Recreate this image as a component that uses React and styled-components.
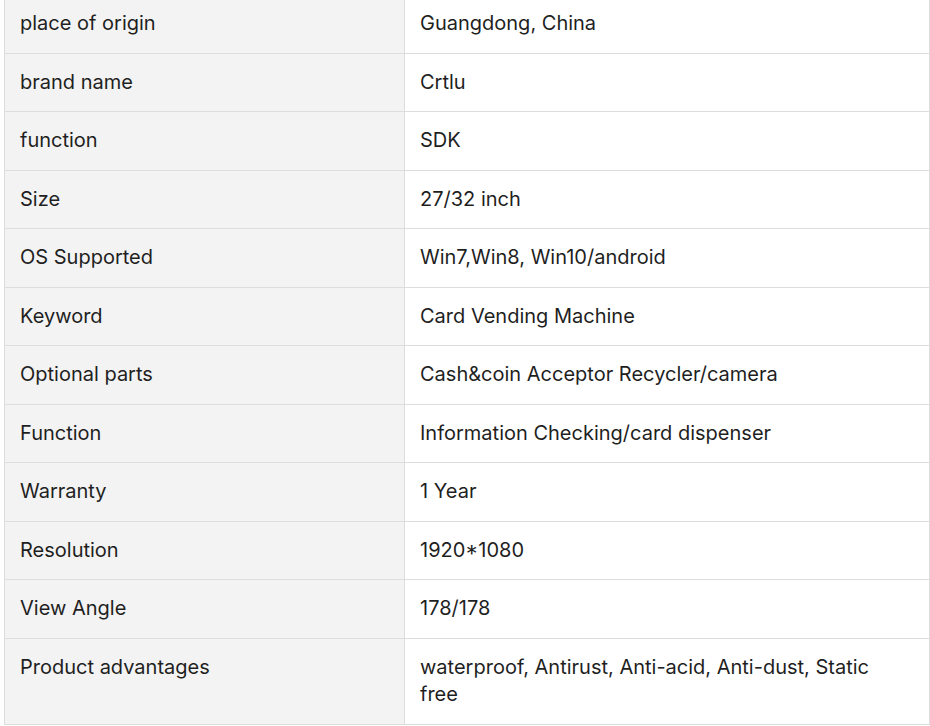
import styled, { createGlobalStyle } from "styled-components";

const rows = [
  ["place of origin", "Guangdong, China"],
  ["brand name", "Crtlu"],
  ["function", "SDK"],
  ["Size", "27/32 inch"],
  ["OS Supported", "Win7,Win8, Win10/android"],
  ["Keyword", "Card Vending Machine"],
  ["Optional parts", "Cash&coin Acceptor Recycler/camera"],
  ["Function", "Information Checking/card dispenser"],
  ["Warranty", "1 Year"],
  ["Resolution", "1920*1080"],
  ["View Angle", "178/178"],
  ["Product advantages", "waterproof, Antirust, Anti-acid, Anti-dust, Static free"],
];

function App() {
  return (
    <>
      <GlobalStyle />
      <Frame>
        <SpecTable>
          <colgroup>
            <col style={{ width: "400px" }} />
            <col />
          </colgroup>
          <tbody>
            {rows.map(([name, value]) => (
              <tr key={name}>
                <Cell $label>{name}</Cell>
                <Cell>{value}</Cell>
              </tr>
            ))}
          </tbody>
        </SpecTable>
      </Frame>
    </>
  );
}

export default App;

const GlobalStyle = createGlobalStyle`
  body {
    margin: 0;
    background: #ffffff;
    font-family: Inter, "Noto Sans", sans-serif;
  }
`;

const Frame = styled.div`
  width: 930px;
  height: 726px;
  overflow: hidden;
  padding-top: 1px;
  box-sizing: border-box;
`;

const SpecTable = styled.table`
  margin: -7px 0 0 4px;
  width: 926px;
  border-collapse: collapse;
  table-layout: fixed;
  border-top: 1px solid #dddddd;
`;

const Cell = styled.td`
  border: 1px solid #dddddd;
  padding: 15px 28px 15px 15px;
  font-size: 20px;
  line-height: 27.5px;
  color: #1f1f1f;
  vertical-align: top;
  background: ${(p) => (p.$label ? "#f3f3f3" : "#ffffff")};
`;
